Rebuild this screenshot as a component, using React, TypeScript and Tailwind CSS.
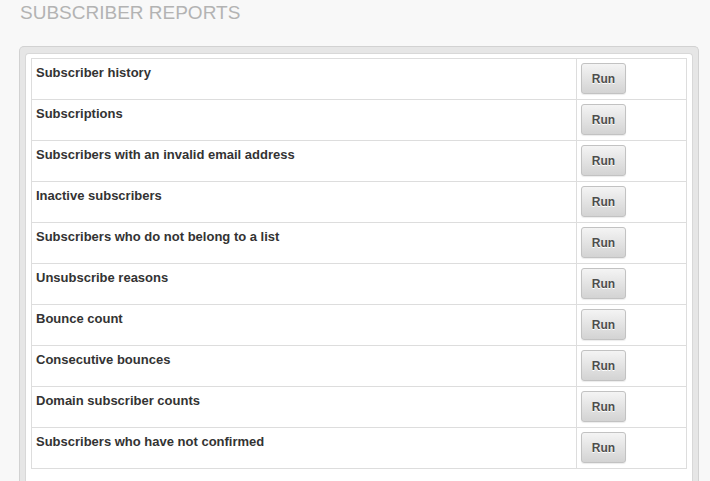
const reports = [
  "Subscriber history",
  "Subscriptions",
  "Subscribers with an invalid email address",
  "Inactive subscribers",
  "Subscribers who do not belong to a list",
  "Unsubscribe reasons",
  "Bounce count",
  "Consecutive bounces",
  "Domain subscriber counts",
  "Subscribers who have not confirmed",
];

export default function App() {
  return (
    <main className="min-h-screen bg-[#f8f8f8] font-['Liberation_Sans',Arial,sans-serif] text-[#333]">
      <div className="pl-[19px] pr-[11px]">
        <h1 className="pl-[1px] pt-[1px] text-[19px] leading-[23px] font-normal text-[#b3b3b3]">
          SUBSCRIBER REPORTS
        </h1>

        <section className="mt-[22px] rounded-t-[5px] border border-b-0 border-[#d2d2d2] bg-[#e6e6e6] px-[5px] pt-[6px]">
          <div className="rounded-t-[4px] border border-b-0 border-[#d8d8d8] bg-white px-[5px] pt-[4px] pb-[20px]">
            <table className="w-full border-collapse border border-[#dddddd]">
              <tbody>
                {reports.map((report) => (
                  <tr key={report} className="h-[41px]">
                    <td className="border border-[#dddddd] px-[4px] pt-[5px] align-top text-[13px] leading-[18px] font-bold text-[#333]">
                      {report}
                    </td>
                    <td className="w-[110px] border border-[#dddddd] px-[4px] pt-[4px] pb-[5px] align-top">
                      <button
                        type="button"
                        className="flex h-[31px] w-[45px] items-center justify-center rounded-[3px] border border-[#c2c2c2] bg-gradient-to-b from-[#f4f4f4] to-[#d3d3d3] text-[12px] font-bold text-[#4d4d4d] shadow-[0_1px_1px_rgba(0,0,0,0.08)] [text-shadow:0_1px_0_#fff]"
                      >
                        Run
                      </button>
                    </td>
                  </tr>
                ))}
              </tbody>
            </table>
          </div>
        </section>
      </div>
    </main>
  );
}
